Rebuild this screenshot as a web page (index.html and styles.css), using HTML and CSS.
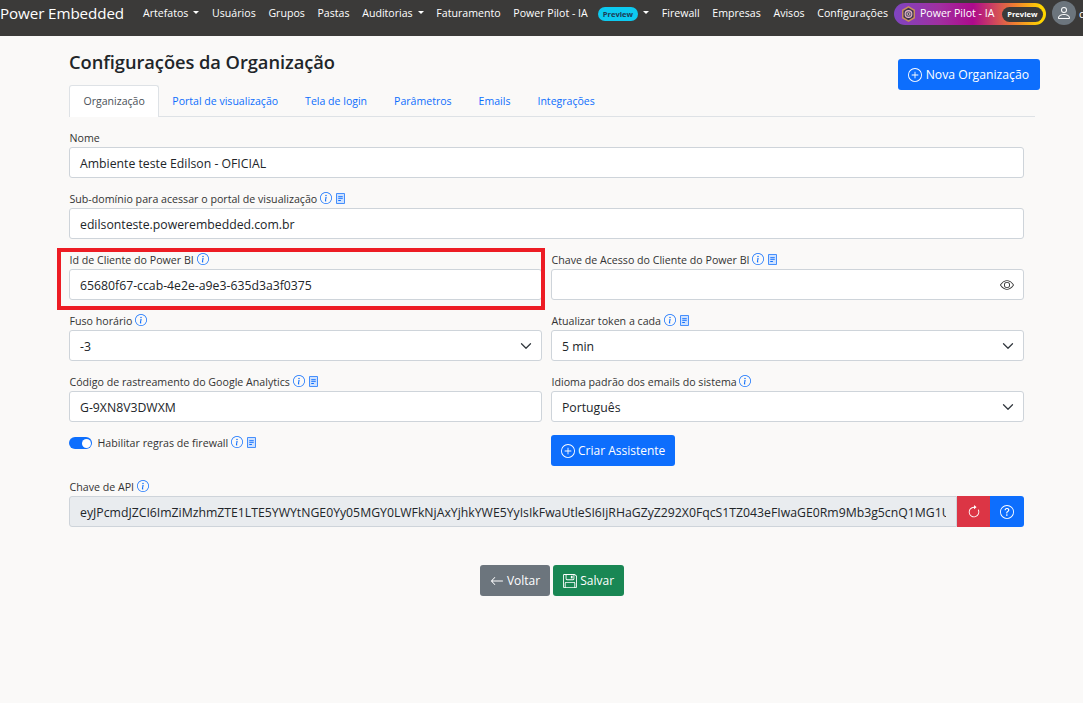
FILE: index.html
```html
<!DOCTYPE html>
<html lang="pt-BR">
<head>
<meta charset="utf-8">
<title>Configurações da Organização</title>
<link rel="stylesheet" href="styles.css">
</head>
<body>
<svg class="sprite" width="0" height="0">
  <symbol id="i-info" viewBox="0 0 16 16"><path d="M8 15A7 7 0 1 1 8 1a7 7 0 0 1 0 14zm0 1A8 8 0 1 0 8 0a8 8 0 0 0 0 16z"/><path d="m8.93 6.588-2.29.287-.082.38.45.083c.294.07.352.176.288.469l-.738 3.468c-.194.897.105 1.319.808 1.319.545 0 1.178-.252 1.465-.598l.088-.416c-.2.176-.492.246-.686.246-.275 0-.375-.193-.304-.533L8.93 6.588zM9 4.5a1 1 0 1 1-2 0 1 1 0 0 1 2 0z"/></symbol>
  <symbol id="i-doc" viewBox="0 0 12 14"><path fill="#cfe2ff" d="M1 1h10v12H1z"/><path d="M1 0h10a1 1 0 0 1 1 1v12a1 1 0 0 1-1 1H1a1 1 0 0 1-1-1V1a1 1 0 0 1 1-1zm0 1v12h10V1H1z"/><path d="M3 4h6v1.2H3zM3 6.5h6v1.2H3zM3 9h3.5v1.2H3z"/></symbol>
  <symbol id="i-plus" viewBox="0 0 16 16"><path d="M8 15A7 7 0 1 1 8 1a7 7 0 0 1 0 14zm0 1A8 8 0 1 0 8 0a8 8 0 0 0 0 16z"/><path d="M8 4a.5.5 0 0 1 .5.5v3h3a.5.5 0 0 1 0 1h-3v3a.5.5 0 0 1-1 0v-3h-3a.5.5 0 0 1 0-1h3v-3A.5.5 0 0 1 8 4z"/></symbol>
  <symbol id="i-eye" viewBox="0 0 16 16"><path d="M16 8s-3-5.5-8-5.5S0 8 0 8s3 5.5 8 5.5S16 8 16 8zM1.173 8a13.133 13.133 0 0 1 1.66-2.043C4.12 4.668 5.88 3.5 8 3.5c2.12 0 3.879 1.168 5.168 2.457A13.133 13.133 0 0 1 14.828 8c-.058.087-.122.183-.195.288-.335.48-.83 1.12-1.465 1.755C11.879 11.332 10.119 12.5 8 12.5c-2.12 0-3.879-1.168-5.168-2.457A13.134 13.134 0 0 1 1.172 8z"/><path d="M8 5.5a2.5 2.5 0 1 0 0 5 2.5 2.5 0 0 0 0-5zM4.5 8a3.5 3.5 0 1 1 7 0 3.5 3.5 0 0 1-7 0z"/></symbol>
  <symbol id="i-left" viewBox="0 0 16 16"><path d="M15 8a.5.5 0 0 0-.5-.5H2.707l3.147-3.146a.5.5 0 1 0-.708-.708l-4 4a.5.5 0 0 0 0 .708l4 4a.5.5 0 0 0 .708-.708L2.707 8.5H14.5A.5.5 0 0 0 15 8z"/></symbol>
  <symbol id="i-floppy" viewBox="0 0 16 16"><path d="M11 2H9v3h2V2Z"/><path d="M1.5 0h11.586a1.5 1.5 0 0 1 1.06.44l1.415 1.414A1.5 1.5 0 0 1 16 2.914V14.5a1.5 1.5 0 0 1-1.5 1.5h-13A1.5 1.5 0 0 1 0 14.5v-13A1.5 1.5 0 0 1 1.5 0ZM1 1.5v13a.5.5 0 0 0 .5.5H2v-4.5A1.5 1.5 0 0 1 3.5 9h9a1.5 1.5 0 0 1 1.5 1.5V15h.5a.5.5 0 0 0 .5-.5V2.914a.5.5 0 0 0-.146-.353l-1.415-1.415A.5.5 0 0 0 13.086 1H13v4.5A1.5 1.5 0 0 1 11.5 7h-7A1.5 1.5 0 0 1 3 5.5V1H1.5a.5.5 0 0 0-.5.5Zm3-.5v4.5a.5.5 0 0 0 .5.5h7a.5.5 0 0 0 .5-.5V1H4ZM3 15h10v-4.5a.5.5 0 0 0-.5-.5h-9a.5.5 0 0 0-.5.5V15Z"/></symbol>
  <symbol id="i-reload" viewBox="0 0 16 16"><path d="M8 3a5 5 0 1 0 4.546 2.914.5.5 0 0 1 .908-.417A6 6 0 1 1 8 2v1z"/><path d="M8 4.466V.534a.25.25 0 0 1 .41-.192l2.36 1.966c.12.1.12.284 0 .384L8.41 4.658A.25.25 0 0 1 8 4.466z"/></symbol>
  <symbol id="i-question" viewBox="0 0 16 16"><path d="M8 15A7 7 0 1 1 8 1a7 7 0 0 1 0 14zm0 1A8 8 0 1 0 8 0a8 8 0 0 0 0 16z"/><path d="M5.255 5.786a.237.237 0 0 0 .241.247h.825c.138 0 .248-.113.266-.25.09-.656.54-1.134 1.342-1.134.686 0 1.314.343 1.314 1.168 0 .635-.374.927-.965 1.371-.673.489-1.206 1.06-1.168 1.987l.003.217a.25.25 0 0 0 .25.246h.811a.25.25 0 0 0 .25-.25v-.105c0-.718.273-.927 1.01-1.486.609-.463 1.244-.977 1.244-2.056 0-1.511-1.276-2.241-2.673-2.241-1.267 0-2.655.59-2.75 2.286zm1.557 5.763c0 .533.425.927 1.01.927.609 0 1.028-.394 1.028-.927 0-.552-.42-.94-1.029-.94-.584 0-1.009.388-1.009.94z"/></symbol>
  <symbol id="i-person" viewBox="0 0 16 16"><path d="M8 8a3 3 0 1 0 0-6 3 3 0 0 0 0 6Zm2-3a2 2 0 1 1-4 0 2 2 0 0 1 4 0Zm4 8c0 1-1 1-1 1H3s-1 0-1-1 1-4 6-4 6 3 6 4Zm-1-.004c-.001-.246-.154-.986-.832-1.664C11.516 10.68 10.289 10 8 10c-2.29 0-3.516.68-4.168 1.332-.678.678-.83 1.418-.832 1.664h10Z"/></symbol>
  <symbol id="i-chevron" viewBox="0 0 16 16"><path fill="none" stroke="#343a40" stroke-width="1.7" stroke-linecap="round" stroke-linejoin="round" d="m2 5 6 6 6-6"/></symbol>
</svg>

<nav class="navbar">
  <a class="brand">Power Embedded</a>
  <ul class="nav-items">
    <li class="nav-item caret">Artefatos</li>
    <li class="nav-item">Usuários</li>
    <li class="nav-item">Grupos</li>
    <li class="nav-item">Pastas</li>
    <li class="nav-item caret">Auditorias</li>
    <li class="nav-item">Faturamento</li>
    <li class="nav-item caret">Power Pilot - IA <span class="badge-cyan">Preview</span></li>
    <li class="nav-item">Firewall</li>
    <li class="nav-item">Empresas</li>
    <li class="nav-item">Avisos</li>
    <li class="nav-item">Configurações</li>
  </ul>
  <a class="pilot">
    <svg class="pilot-logo" viewBox="0 0 16 18">
      <path fill="#3d3350" stroke="#c8905c" stroke-width="1.6" d="M8 1l6.5 3.8v8.4L8 17l-6.5-3.8V4.8z"/>
      <circle cx="8" cy="9" r="3.8" fill="#6a5a78" stroke="#e8b8c8" stroke-width="1.2"/>
      <circle cx="8" cy="9" r="1.5" fill="#3d3350" stroke="#f0d8c8" stroke-width=".8"/>
    </svg>
    <span class="pilot-text">Power Pilot - IA</span>
    <span class="badge-dark">Preview</span>
  </a>
  <span class="avatar"><svg class="icon-avatar"><use href="#i-person"/></svg></span>
  <span class="user-name">c</span>
</nav>

<main class="page">
  <header class="page-head">
    <h1 class="title">Configurações da Organização</h1>
    <a class="btn btn-primary btn-new"><svg class="ico"><use href="#i-plus"/></svg>Nova Organização</a>
  </header>

  <div class="content">
    <ul class="tabs">
      <li class="tab active">Organização</li>
      <li class="tab">Portal de visualização</li>
      <li class="tab">Tela de login</li>
      <li class="tab">Parâmetros</li>
      <li class="tab">Emails</li>
      <li class="tab">Integrações</li>
    </ul>

    <form class="form">
      <div class="field full">
        <label class="lbl">Nome</label>
        <div class="control">Ambiente teste Edilson - OFICIAL</div>
      </div>
      <div class="field full">
        <label class="lbl">Sub-domínio para acessar o portal de visualização <svg class="hint"><use href="#i-info"/></svg><svg class="doc"><use href="#i-doc"/></svg></label>
        <div class="control">edilsonteste.powerembedded.com.br</div>
      </div>
      <div class="field">
        <label class="lbl">Id de Cliente do Power BI <svg class="hint"><use href="#i-info"/></svg></label>
        <div class="control">65680f67-ccab-4e2e-a9e3-635d3a3f0375</div>
        <span class="highlight"></span>
      </div>
      <div class="field">
        <label class="lbl">Chave de Acesso do Cliente do Power BI <svg class="hint"><use href="#i-info"/></svg><svg class="doc"><use href="#i-doc"/></svg></label>
        <div class="control control-icon"><span></span><svg class="eye"><use href="#i-eye"/></svg></div>
      </div>
      <div class="field">
        <label class="lbl">Fuso horário <svg class="hint"><use href="#i-info"/></svg></label>
        <div class="control control-icon"><span>-3</span><svg class="chev"><use href="#i-chevron"/></svg></div>
      </div>
      <div class="field">
        <label class="lbl">Atualizar token a cada <svg class="hint"><use href="#i-info"/></svg><svg class="doc"><use href="#i-doc"/></svg></label>
        <div class="control control-icon"><span>5 min</span><svg class="chev"><use href="#i-chevron"/></svg></div>
      </div>
      <div class="field">
        <label class="lbl">Código de rastreamento do Google Analytics <svg class="hint"><use href="#i-info"/></svg><svg class="doc"><use href="#i-doc"/></svg></label>
        <div class="control">G-9XN8V3DWXM</div>
      </div>
      <div class="field">
        <label class="lbl">Idioma padrão dos emails do sistema <svg class="hint"><use href="#i-info"/></svg></label>
        <div class="control control-icon"><span>Português</span><svg class="chev"><use href="#i-chevron"/></svg></div>
      </div>
      <div class="switch-row">
        <span class="switch"></span>
        <label class="lbl">Habilitar regras de firewall <svg class="hint"><use href="#i-info"/></svg><svg class="doc"><use href="#i-doc"/></svg></label>
      </div>
      <div class="assist-row">
        <a class="btn btn-primary"><svg class="ico"><use href="#i-plus"/></svg>Criar Assistente</a>
      </div>
      <div class="field full">
        <label class="lbl">Chave de API <svg class="hint"><use href="#i-info"/></svg></label>
        <div class="input-group">
          <div class="control readonly"><span class="clip">eyJPcmdJZCI6ImZiMzhmZTE1LTE5YWYtNGE0Yy05MGY0LWFkNjAxYjhkYWE5YyIsIkFwaUtleSI6IjRHaGZyZ292X0FqcS1TZ043eFIwaGE0Rm9Mb3g5cnQ1MG1U</span></div>
          <a class="btn-addon danger"><svg class="ico-solo"><use href="#i-reload"/></svg></a>
          <a class="btn-addon primary"><svg class="ico-solo"><use href="#i-question"/></svg></a>
        </div>
      </div>
    </form>

    <div class="actions">
      <a class="btn btn-secondary"><svg class="ico"><use href="#i-left"/></svg>Voltar</a>
      <a class="btn btn-success"><svg class="ico"><use href="#i-floppy"/></svg>Salvar</a>
    </div>
  </div>
</main>
</body>
</html>
```

FILE: styles.css
```css
* { box-sizing: border-box; }
html, body { margin: 0; padding: 0; }
body {
  background: #faf9f8;
  color: #212529;
  font-family: "Open Sans", "Noto Sans", sans-serif;
  font-size: 12px;
  height: 703px;
  overflow: hidden;
}
.sprite { position: absolute; }
ul { list-style: none; margin: 0; padding: 0; }

/* navbar */
.navbar {
  height: 36px;
  background: #3b3a39;
  color: #fff;
  display: flex;
  align-items: flex-start;
  white-space: nowrap;
  overflow: hidden;
}
.brand { font-size: 15.2px; line-height: 27px; width: 143px; flex: none; letter-spacing: -.1px; }
.nav-items { display: flex; gap: 12.7px; font-size: 10.6px; line-height: 27px; }
.nav-item { display: flex; align-items: center; }
.caret::after {
  content: "";
  border-top: 3.5px solid #fff;
  border-left: 3.5px solid transparent;
  border-right: 3.5px solid transparent;
  margin-left: 5px;
  margin-bottom: 2px;
}
.badge-cyan {
  background: #0dcaf0;
  color: #1d3a55;
  font-size: 7.6px;
  font-weight: 700;
  line-height: 14px;
  height: 14px;
  padding: 0 5px;
  border-radius: 7px;
  margin-left: 10px;
  margin-top: 1px;
}
.pilot {
  margin: 3px 0 0 6px;
  width: 152px;
  height: 22px;
  flex: none;
  border-radius: 11px;
  background: linear-gradient(90deg, #7f45c0 0%, #a02fa0 30%, #ad0a8c 52%, #f08030 80%, #ffd600 97%);
  display: flex;
  align-items: center;
  padding: 0 3px 0 7px;
}
.pilot-logo { width: 15px; height: 16px; flex: none; }
.pilot-text { font-size: 10.6px; margin-left: 4px; margin-top: -2px; flex: 1; }
.badge-dark {
  background: #3b3a39;
  color: #fff;
  font-size: 7.6px;
  font-weight: 700;
  line-height: 15px;
  height: 15px;
  padding: 0 5.5px;
  border-radius: 8px;
}
.avatar {
  margin: 1px 0 0 6px;
  width: 24px;
  height: 24px;
  flex: none;
  background: #6c757d;
  border-radius: 50%;
  display: flex;
  align-items: center;
  justify-content: center;
}
.icon-avatar { width: 16px; height: 16px; fill: #fff; }
.user-name { font-size: 11px; line-height: 27px; margin-left: 3px; }

/* page */
.page { padding: 13px 43px 0 69px; }
.page-head { display: flex; justify-content: space-between; align-items: flex-start; height: 36px; }
.title { margin: 0; font-size: 18.3px; line-height: 26px; font-weight: 600; letter-spacing: -.05px; }
.content { width: 966px; }
.btn {
  display: inline-flex;
  align-items: center;
  height: 31px;
  padding: 0 10px;
  border-radius: 3px;
  color: #fff;
  font-size: 12px;
  white-space: nowrap;
}
.btn-new { margin-top: 10px; font-size: 12.2px; padding-right: 11px; }
.btn-new .ico { margin-right: 4px; }
.btn-primary { background: #0d6efd; }
.btn-secondary { background: #6c757d; }
.btn-success { background: #198754; }
.ico { width: 14px; height: 14px; fill: #fff; margin-right: 3px; flex: none; }

/* tabs */
.tabs { display: flex; height: 32px; border-bottom: 1px solid #dee2e6; font-size: 10.55px; }
.tab {
  padding: 0 12.5px;
  line-height: 31px;
  color: #0d6efd;
  border: 1px solid transparent;
  border-bottom: 0;
  height: 32px;
}
.tab.active {
  padding: 0 13px 0 13.5px;
  background: #fff;
  color: #495057;
  border-color: #dee2e6;
  border-radius: 3px 3px 0 0;
}

/* form */
.form {
  margin: 12px 11px 0 0;
  display: grid;
  grid-template-columns: 473px 473px;
  column-gap: 9px;
  row-gap: 12px;
}
.field { position: relative; min-width: 0; }
.full { grid-column: 1 / -1; }
.lbl {
  display: flex;
  align-items: center;
  height: 18px;
  font-size: 10.65px;
  color: #333;
  white-space: pre;
  padding-left: .5px;
}
.hint { width: 12px; height: 12px; fill: #0d6efd; flex: none; margin-top: -2px; }
.doc { width: 9px; height: 11px; fill: #0d6efd; margin-left: 4px; flex: none; margin-top: -1px; }
.control {
  height: 31px;
  padding: 0 10px;
  background: #fff;
  border: 1px solid #ced4da;
  border-radius: 3px;
  font-size: 12.25px;
  line-height: 31px;
  white-space: nowrap;
  overflow: hidden;
}
.control-icon { display: flex; align-items: center; justify-content: space-between; }
.control-icon span { padding-top: 2px; line-height: 29px; }
.eye { width: 14px; height: 14px; fill: #333; margin-right: -1px; }
.chev { width: 12px; height: 12px; margin-right: -1px; }
.highlight {
  position: absolute;
  left: -12px;
  top: -3px;
  width: 488px;
  height: 62px;
  border: 4px solid #ed1c24;
  pointer-events: none;
}
.switch-row { display: flex; align-items: center; gap: 5px; height: 18px; }
.switch {
  width: 23px;
  height: 12px;
  border-radius: 6px;
  background: #0d6efd;
  position: relative;
  flex: none;
}
.switch::after {
  content: "";
  position: absolute;
  right: 1.5px;
  top: 1.5px;
  width: 9px;
  height: 9px;
  border-radius: 50%;
  background: #fff;
}
.assist-row { padding-top: 1px; }
.input-group { display: flex; }
.readonly {
  flex: 1;
  min-width: 0;
  background: #e9ecef;
  border-radius: 3px 0 0 3px;
}
.clip { display: block; overflow: hidden; }
.btn-addon {
  height: 31px;
  flex: none;
  display: flex;
  align-items: center;
  justify-content: center;
}
.danger { background: #dc3545; width: 33px; }
.primary { background: #0d6efd; width: 34px; border-radius: 0 3px 3px 0; }
.ico-solo { width: 14px; height: 14px; fill: #fff; }

.actions { display: flex; justify-content: center; gap: 3px; margin-top: 38px; }
```
